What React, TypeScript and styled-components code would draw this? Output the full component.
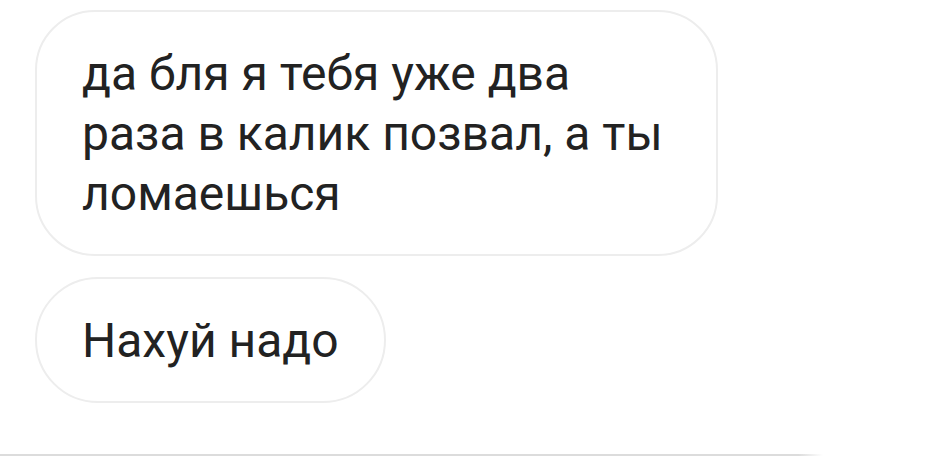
import React from 'react'
import styled, { createGlobalStyle } from 'styled-components'

const GlobalStyle = createGlobalStyle`
    html, body {
        margin: 0;
        padding: 0;
        background: #ffffff;
    }
    body {
        font-family: Roboto, 'Noto Sans', sans-serif;
        -webkit-font-smoothing: antialiased;
    }
`

const messages = [
    { id: 1, text: 'да бля я тебя уже два раза в калик позвал, а ты ломаешься', radius: 60 },
    { id: 2, text: 'Нахуй надо', radius: 63 },
]

export default function App() {
    return (
        <Root>
            <GlobalStyle />
            <Thread>
                {messages.map(m => (
                    <Bubble key={m.id} $radius={m.radius}>
                        {m.text}
                    </Bubble>
                ))}
            </Thread>
            <Divider />
        </Root>
    )
}

const Root = styled.div`
    width: 932px;
    height: 457px;
    overflow: hidden;
    display: flex;
    flex-direction: column;
    background: #ffffff;
`

const Thread = styled.div`
    flex: 1;
    display: flex;
    flex-direction: column;
    align-items: flex-start;
    gap: 21px;
    padding: 10px 0 0 35px;
`

const Bubble = styled.div<{ $radius: number }>`
    box-sizing: border-box;
    width: fit-content;
    max-width: 683px;
    padding: 32px 45px 30px;
    border: 2px solid #ededed;
    border-radius: ${p => p.$radius}px;
    background: #ffffff;
    color: #222222;
    font-size: 48px;
    line-height: 60px;
    letter-spacing: 0;
`

const Divider = styled.div`
    width: 823px;
    height: 2px;
    margin-bottom: 1px;
    background: linear-gradient(to right, #dcdcdc 0%, #dcdcdc 97%, #ffffff 100%);
`
